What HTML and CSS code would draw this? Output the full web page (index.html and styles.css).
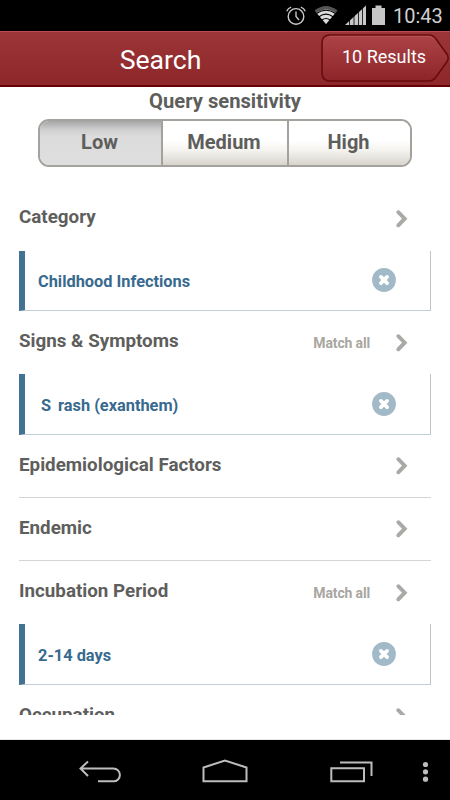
FILE: index.html
```html
<!DOCTYPE html>
<html lang="en">
<head>
<meta charset="utf-8">
<title>Search</title>
<link rel="stylesheet" href="styles.css">
</head>
<body>
<svg class="defs" width="0" height="0">
  <symbol id="chevron" viewBox="0 0 14 20"><path d="M3.300 3.200 9.700 9.700 3.300 16.300" fill="none" stroke="#aaa9a5" stroke-width="3.900" stroke-linecap="round" stroke-linejoin="miter"/></symbol>
  <symbol id="remove" viewBox="0 0 24 24"><circle cx="12" cy="12" r="11.900" fill="#a2b9c8"/><path d="M8.900 8.900 15.100 15.100M15.100 8.900 8.900 15.100" stroke="#fff" stroke-width="3.700" stroke-linecap="round"/></symbol>
</svg>
<div class="status">
  <svg class="status-icons" width="104" height="31" viewBox="286 0 104 31">
    <g fill="none" stroke="#c9c9c9" stroke-width="1.400">
      <circle cx="296" cy="16.400" r="7.800"/><path d="M296 11.500V16.500L299 20M286.800 11.200Q288 8.200 291.200 7.200M305.200 11.200Q304 8.200 300.800 7.200"/>
    </g>
    <path d="M314.500 10.500Q326 1.500 337.500 10.500L326 24Z" fill="#555"/>
    <path d="M316.500 12.800Q326 6 335.500 12.800L326 24Z" fill="#ddd"/>
    <path d="M316.500 13.500Q326 7 335.500 13.500M319 16.700Q326 11.500 333 16.700M322 20Q326 17 330 20" fill="none" stroke="#000" stroke-width="1.100"/>
    <path d="M345 25 366 5.500V25Z" fill="#c9c9c9"/>
    <path d="M349.500 5V26M354 5V26M358.500 5V26M362.500 5V26" stroke="#000" stroke-width=".8"/>
    <path d="M372 8H375.500V5.500H381.500V8H385V25H372Z" fill="#c6c6c6"/>
  </svg>
  <span class="clock">10:43</span>
</div>
<header class="header">
  <h1 class="title">Search</h1>
  <div class="results">
    <svg class="results-shape" width="131" height="50" viewBox="0 0 131 50">
      <defs><linearGradient id="btn" x2="0" y2="1"><stop stop-color="#ad4347"/><stop offset="1" stop-color="#8c2529"/></linearGradient></defs>
      <path d="M10 2H109Q113 2 116 6L127.500 22Q129 25 127.500 28L116 44Q113 48 109 48H10Q2 48 2 40V10Q2 2 10 2Z" fill="url(#btn)" stroke="#680a0e" stroke-width="1.600"/>
      <path d="M9 3.300H109Q112 3.300 114.500 6.500" fill="none" stroke="#bd5559" stroke-width=".8"/>
    </svg>
    <span class="results-label">10 Results</span>
  </div>
</header>
<main class="content">
  <h2 class="sensitivity">Query sensitivity</h2>
  <div class="segments">
    <div class="segment selected">Low</div>
    <div class="segment">Medium</div>
    <div class="segment">High</div>
  </div>
  <div class="list">
    <div class="row"><span class="name">Category</span><svg class="chevron"><use href="#chevron"/></svg></div>
    <div class="chosen"><span class="value">Childhood Infections</span><svg class="remove"><use href="#remove"/></svg></div>
    <div class="row"><span class="name">Signs &amp; Symptoms</span><span class="match">Match all</span><svg class="chevron"><use href="#chevron"/></svg></div>
    <div class="chosen tall"><span class="value symptom"><span>S</span><span>rash (exanthem)</span></span><svg class="remove"><use href="#remove"/></svg></div>
    <div class="row ruled"><span class="name">Epidemiological Factors</span><svg class="chevron"><use href="#chevron"/></svg></div>
    <div class="row ruled"><span class="name">Endemic</span><svg class="chevron"><use href="#chevron"/></svg></div>
    <div class="row"><span class="name">Incubation Period</span><span class="match">Match all</span><svg class="chevron"><use href="#chevron"/></svg></div>
    <div class="chosen tall"><span class="value">2-14 days</span><svg class="remove"><use href="#remove"/></svg></div>
    <div class="row"><span class="name">Occupation</span><svg class="chevron"><use href="#chevron"/></svg></div>
  </div>
</main>
<div class="spacer"></div>
<nav class="nav">
  <svg width="450" height="60" viewBox="0 740 450 60" fill="none" stroke="#bdbdbd" stroke-width="2">
    <path d="M80 768.500H113.500A6.300 6.300 0 0 1 113.500 781.300H98M88 761.500 80.500 768.500 88 776"/>
    <path d="M203.500 781.300V767.500L225 760.500 246.500 767.500V781.300Z"/>
    <path d="M331.300 768.200H364V781.300H331.300ZM340 762.500H371.500V776"/>
    <g fill="#bdbdbd" stroke="none"><circle cx="425.500" cy="764.500" r="2.600"/><circle cx="425.500" cy="771.800" r="2.600"/><circle cx="425.500" cy="779.200" r="2.600"/></g>
  </svg>
</nav>
</body>
</html>
```
FILE: styles.css
```css
* { box-sizing: border-box; }
body {
  margin: 0;
  width: 450px;
  height: 800px;
  overflow: hidden;
  display: flex;
  flex-direction: column;
  background: #fff;
  font-family: Roboto, "Liberation Sans", sans-serif;
  color: #5e5e5c;
}
.defs { position: absolute; }
svg { display: block; flex: none; }
.status {
  height: 31px;
  flex: none;
  background: #000;
  display: flex;
  justify-content: flex-end;
  align-items: center;
  padding-right: 7px;
}
.clock {
  width: 50px;
  margin-left: 3px;
  font-size: 20px;
  line-height: 31px;
  padding-top: 1px;
  color: #cfcfcf;
  white-space: nowrap;
}
.header {
  height: 56px;
  flex: none;
  display: grid;
  grid-template-columns: 320px 130px;
  background: linear-gradient(#9c3538, #8e272a);
  border-top: 1px solid #c0494d;
  border-bottom: 2px solid #690006;
}
.title {
  margin: 0;
  padding-left: 1px;
  text-align: center;
  font-size: 26.6px;
  font-weight: 400;
  line-height: 56px;
  color: #fff;
}
.results { display: grid; padding-top: 1px; }
.results-shape, .results-label { grid-area: 1 / 1; }
.results-label {
  z-index: 1;
  padding-left: 22px;
  font-size: 18px;
  line-height: 47px;
  color: #fff;
  white-space: nowrap;
}
.content { height: 628px; flex: none; overflow: hidden; }
.sensitivity {
  margin: 0;
  height: 32px;
  line-height: 28px;
  text-align: center;
  font-size: 20.2px;
  font-weight: 700;
}
.segments {
  width: 374px;
  height: 48px;
  margin-left: 38px;
  display: grid;
  grid-template-columns: 121px 126px 1fr;
  border: 2px solid #a3a29d;
  border-radius: 11px;
  overflow: hidden;
}
.segment {
  padding-right: 2px;
  text-align: center;
  font-size: 20px;
  font-weight: 700;
  line-height: 42px;
  background: linear-gradient(#fff 45%, #f5f4f0 65%, #d8d5ce);
}
.segment + .segment { border-left: 2px solid #a3a29d; }
.selected { background: linear-gradient(#a5a5a5, #cfcfcf 20%, #dcdcdc 35%, #dedede); }
.list { margin: 20px 19px 0; }
.row {
  height: 63px;
  display: flex;
  align-items: center;
  padding-right: 22px;
}
.row:first-child { height: 64px; padding-bottom: 1px; }
.ruled { border-bottom: 1px solid #d4d5d3; }
.name {
  flex: 1;
  font-size: 18.8px;
  font-weight: 700;
  line-height: 24px;
  padding-bottom: 3px;
}
.match {
  font-size: 14px;
  font-weight: 700;
  letter-spacing: -.15px;
  color: #a8a6a0;
  margin-right: 25px;
  padding-top: 1px;
}
.chevron { width: 14px; height: 20px; }
.chosen {
  width: 412px;
  height: 60px;
  display: flex;
  align-items: center;
  justify-content: space-between;
  padding: 0 34px 0 13px;
  border-left: 6px solid #427392;
  border-right: 1px solid #bfc4c4;
  border-bottom: 1px solid #bfd0d8;
}
.chosen:not(.tall) { padding-bottom: 1px; }
.tall { height: 61px; }
.value {
  font-size: 16.35px;
  font-weight: 700;
  color: #376a8e;
  padding-top: 2px;
}
.symptom { display: flex; gap: 7px; padding-left: 3px; }
.remove { width: 24px; height: 24px; }
.spacer { height: 25px; flex: none; border-bottom: 1px solid #e8e8e8; }
.nav { height: 60px; flex: none; background: #000; }
```
